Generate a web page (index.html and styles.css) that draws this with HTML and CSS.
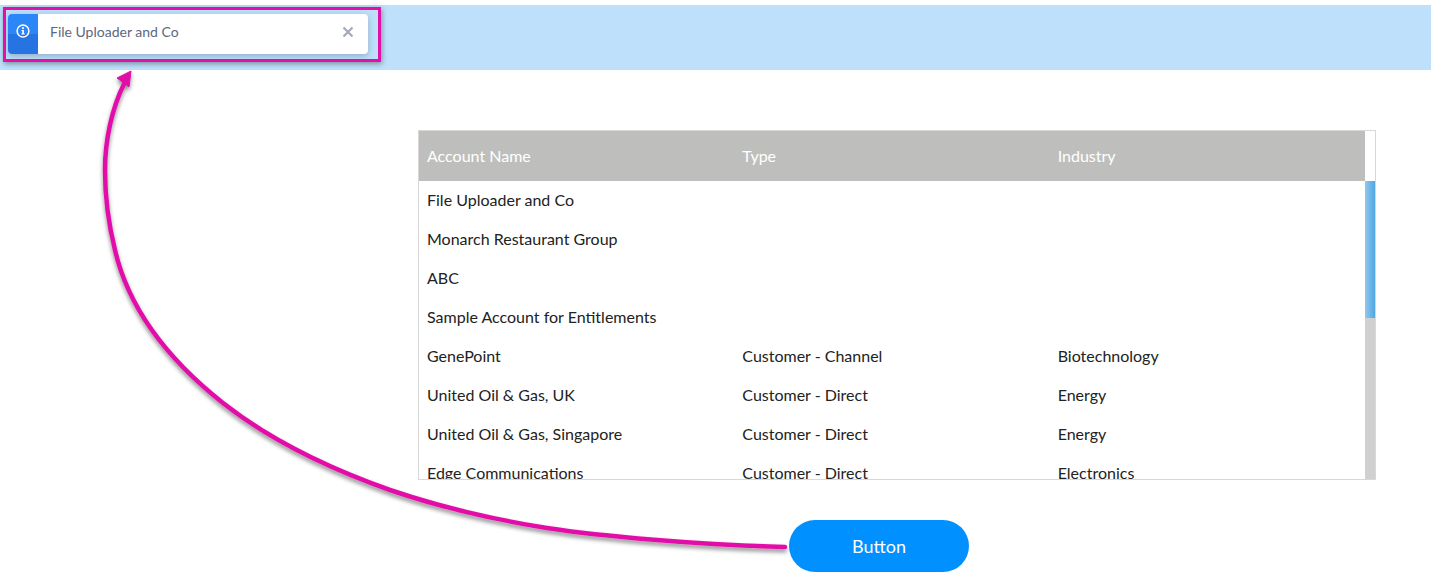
FILE: index.html
```html
<!DOCTYPE html>
<html lang="en">
<head>
<meta charset="UTF-8">
<title>Accounts</title>
<link rel="stylesheet" href="styles.css">
</head>
<body>
<div class="banner">
    <div class="toast">
        <div class="toast-icon">
            <svg width="14" height="14" viewBox="0 0 14 14">
                <circle cx="7" cy="7" r="5.9" fill="none" stroke="#fff" stroke-width="1.5"/>
                <rect x="6.1" y="3.2" width="1.8" height="1.8" fill="#fff"/>
                <path d="M5.5 6h2.4v3.6h.9v1H5.3v-1h1V7h-.8z" fill="#fff"/>
            </svg>
        </div>
        <div class="toast-text">File Uploader and Co</div>
        <svg class="toast-close" width="12" height="12" viewBox="0 0 12 12">
            <path d="M1.5 1.5l9 9M10.5 1.5l-9 9" stroke="#a3a9ba" stroke-width="2.2" fill="none"/>
        </svg>
    </div>
</div>

<div class="grid">
    <div class="grid-main">
        <table>
            <thead>
                <tr><th>Account Name</th><th>Type</th><th>Industry</th></tr>
            </thead>
            <tbody>
                <tr><td>File Uploader and Co</td><td></td><td></td></tr>
                <tr><td>Monarch Restaurant Group</td><td></td><td></td></tr>
                <tr><td>ABC</td><td></td><td></td></tr>
                <tr><td>Sample Account for Entitlements</td><td></td><td></td></tr>
                <tr><td>GenePoint</td><td>Customer - Channel</td><td>Biotechnology</td></tr>
                <tr><td>United Oil &amp; Gas, UK</td><td>Customer - Direct</td><td>Energy</td></tr>
                <tr><td>United Oil &amp; Gas, Singapore</td><td>Customer - Direct</td><td>Energy</td></tr>
                <tr><td>Edge Communications</td><td>Customer - Direct</td><td>Electronics</td></tr>
            </tbody>
        </table>
    </div>
    <div class="scroll">
        <div class="scroll-top"></div>
        <div class="scroll-track"><div class="scroll-thumb"></div></div>
    </div>
</div>

<button class="btn">Button</button>

<!-- annotation drawn over the page -->
<div class="callout"></div>
<svg class="arrow" width="1431" height="586" viewBox="0 0 1431 586">
    <defs>
        <filter id="sombra" x="-5%" y="-5%" width="110%" height="110%">
            <feDropShadow dx="0" dy="3" stdDeviation="2" flood-color="#000" flood-opacity="0.45"/>
        </filter>
    </defs>
    <g filter="url(#sombra)">
        <path d="M785 547C700 545 600 536 547 528C490 519 440 507 390 490C325 467 270 440 223 403C175 365 130 315 115 250C109 226 105 200 105 170C105 140 112 108 124 84" fill="none" stroke="#e20fa8" stroke-width="4.5" stroke-linecap="round"/>
        <path d="M131 71L117 78L129 87z" fill="#e20fa8" stroke="#e20fa8" stroke-width="1"/>
    </g>
</svg>
</body>
</html>
```
FILE: styles.css
```css
body { margin: 0; background: #fff; font-family: "Lato", sans-serif; color: #222; height: 586px; overflow: hidden; position: relative; }
.banner { margin-top: 5px; height: 65px; background: #bee0fa; padding: 9px 0 0 8px; box-sizing: border-box; }
.toast { width: 360px; height: 40px; background: #fff; border-radius: 4px; display: flex; align-items: center; overflow: hidden; box-shadow: 0 2px 6px rgba(60, 80, 110, .35); }
.toast-icon { width: 30px; height: 40px; background: linear-gradient(#2b86f7 50%, #2674e2 50%); display: flex; justify-content: center; padding-top: 10px; box-sizing: border-box; }
.toast-text { flex: 1; padding: 0 0 5px 12px; font-size: 14px; color: #5c6780; }
.toast-close { margin: 0 14px 5px 0; }

.grid { margin: 60px 0 0 418px; width: 956px; height: 348px; border: 1px solid #d8d8d8; display: flex; overflow: hidden; }
.grid-main { width: 946px; }
table { width: 946px; table-layout: fixed; border-collapse: collapse; font-size: 16px; }
th { height: 48px; background: #bebfbd; color: #fff; font-weight: 400; text-align: left; padding: 0 0 2px 8px; }
td { height: 37px; padding: 0 0 2px 8px; white-space: nowrap; }
.scroll { width: 10px; display: flex; flex-direction: column; }
.scroll-top { height: 50px; background: #fff; }
.scroll-track { flex: 1; background: #d0d0d0; }
.scroll-thumb { height: 137px; background: linear-gradient(to right, #93c7ec, #4fa7e3); }

.btn { display: block; margin: 40px 0 0 789px; width: 180px; height: 52px; border: none; border-radius: 26px; background: #0090ff; color: #fff; font-family: "Lato", sans-serif; font-size: 18px; }

.callout { position: absolute; left: 3px; top: 7px; width: 372px; height: 49px; border: 3px solid #e20fa8; box-shadow: 1px 2px 5px rgba(0, 0, 0, .35); }
.arrow { position: absolute; left: 0; top: 0; pointer-events: none; }
```
